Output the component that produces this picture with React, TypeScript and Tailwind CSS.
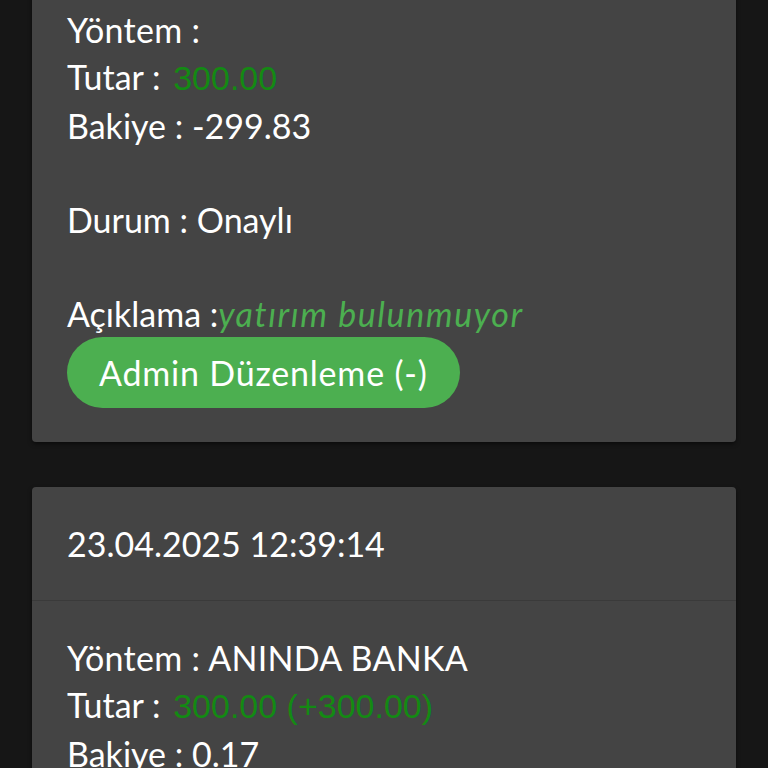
const rows = [
  {
    date: "23.04.2025 12:41:02",
    method: "",
    amount: "300.00",
    balance: "-299.83",
    status: "Onaylı",
    note: "yatırım bulunmuyor",
    admin: true,
  },
  {
    date: "23.04.2025 12:39:14",
    method: "ANINDA BANKA",
    amount: "300.00 (+300.00)",
    balance: "0.17",
    status: "Onaylı",
    note: "",
    admin: false,
  },
];

const Card = ({ row }: { row: (typeof rows)[number] }) => {
  return (
    <div className="bg-[#444444] rounded-[4px] shadow-[0_2px_4px_rgba(0,0,0,0.5)]">
      <div className="px-[35px] py-[33px] border-b border-[#3a3a3a]">{row.date}</div>
      <div className="px-[35px] pt-[33px] pb-[34px]">
        <div className="tracking-[0.3px]">Yöntem : {row.method}</div>
        <div>
          Tutar :{" "}
          <span className="ml-[4px] text-[#138a13] font-['Liberation_Sans',sans-serif]">{row.amount}</span>
        </div>
        <div>Bakiye : {row.balance}</div>
        <div className="h-[47px]" />
        <div>Durum : {row.status}</div>
        <div className="h-[47px]" />
        <div>
          Açıklama :<span className="italic tracking-[1.6px] text-[#4caf50]">{row.note}</span>
        </div>
        {row.admin && (
          <button className="h-[71px] px-[32px] rounded-full bg-[#4caf50] text-white tracking-[0.8px]">
            Admin Düzenleme (-)
          </button>
        )}
      </div>
    </div>
  );
};

export default function App() {
  return (
    <div className="h-[768px] overflow-hidden bg-[#161616] font-['Lato',sans-serif] text-[34px] leading-[47px] text-white">
      <div className="flex flex-col gap-[45px] px-[32px] -mt-[141px]">
        {rows.map((row) => (
          <Card key={row.date} row={row} />
        ))}
      </div>
    </div>
  );
}
